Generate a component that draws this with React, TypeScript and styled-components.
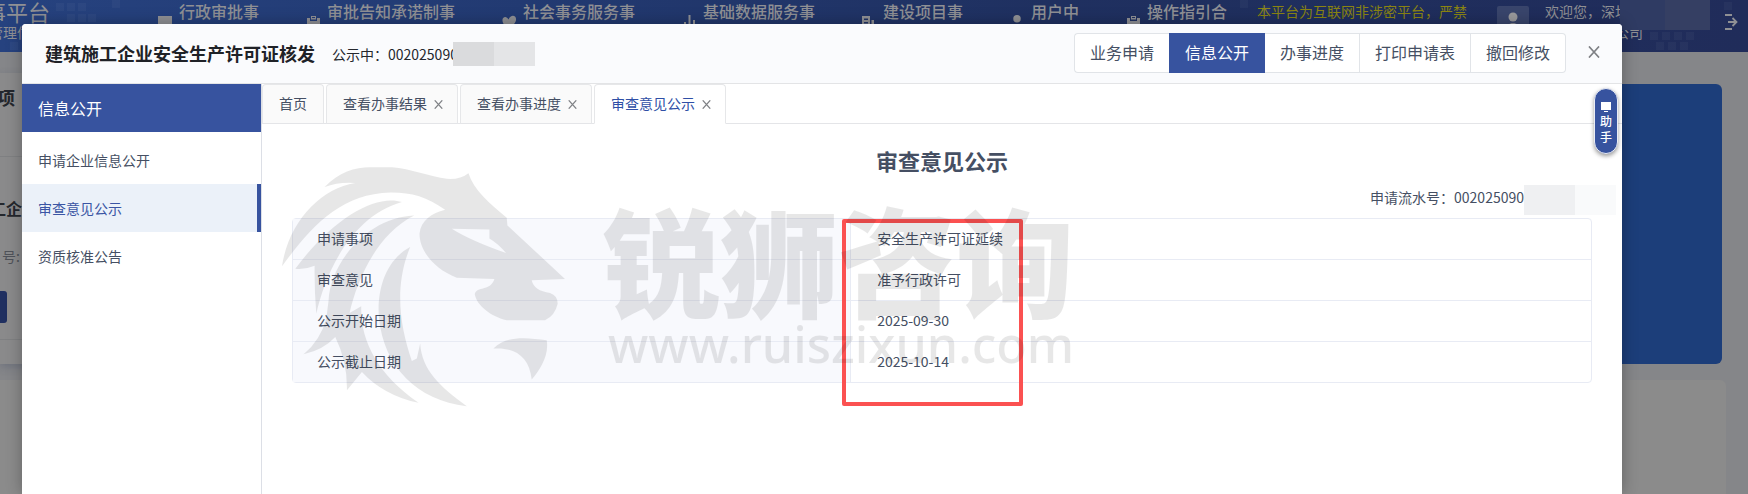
import React from 'react';
import styled, { createGlobalStyle } from 'styled-components';

const GlobalStyle = createGlobalStyle`
  * { box-sizing: border-box; }
  body {
    margin: 0;
    font-family: "Noto Sans CJK SC", "Noto Sans", sans-serif;
    font-size: 14px;
    line-height: 20px;
    color: #454f63;
  }
  button { font: inherit; color: inherit; cursor: pointer; }
  a { color: inherit; text-decoration: none; }
`;

const Page = styled.div`
  display: grid;
  grid-template-columns: minmax(0, 1fr);
  grid-template-rows: minmax(100vh, auto);
  overflow: hidden;
`;

/* ---------- dimmed portal page ---------- */

const Portal = styled.div`
  grid-area: 1 / 1;
  display: flex;
  flex-direction: column;
  background: #858689;
`;

const PortalHeader = styled.header`
  position: relative;
  display: flex;
  align-items: flex-start;
  height: 52px;
  background: linear-gradient(90deg, #26427f 0%, #223a72 30%, #1f3060 60%, #202c5a 100%);
  color: #8f9094;
  white-space: nowrap;
  overflow: hidden;
`;

const HeaderDots = styled.svg`
  position: absolute;
  inset: 0;
  width: 100%;
  height: 52px;
  fill: #ffffff;
  opacity: 0.03;
`;

const Brand = styled.div`
  display: flex;
  flex-direction: column;
  align-items: flex-end;
  width: 50px;
  flex: none;
`;

const BrandTitle = styled.div`
  font-size: 22px;
  line-height: 22px;
`;

const BrandSub = styled.div`
  padding-right: 19px;
  line-height: 20px;
`;

const PortalNav = styled.nav`
  display: flex;
  gap: 47px;
  margin-left: 108px;
  font-size: 16px;
  line-height: 22px;
  font-weight: 500;
`;

const NavLink = styled.a`
  display: flex;
  gap: 5px;
`;

const NavIcon = styled.svg`
  width: 16px;
  height: 16px;
  margin-top: 15px;
  fill: currentColor;
`;

const Notice = styled.div`
  margin-left: 30px;
  line-height: 22px;
  color: #8a8412;
`;

const Avatar = styled.svg`
  width: 32px;
  height: 32px;
  margin: 6px 16px 0 30px;
  flex: none;
`;

const UserInfo = styled.div`
  position: relative;
  line-height: 22px;
`;

const UserCompany = styled.div`
  padding-left: 70px;
  line-height: 20px;
`;

const NameMask = styled.span`
  position: absolute;
  left: 75px;
  top: 0;
  width: 90px;
  height: 30px;
  background: linear-gradient(90deg, #2f3b63 50%, #353f63 50%);
`;

const LogoutButton = styled.button`
  display: flex;
  margin: 13px 10px 0 auto;
  padding: 0;
  border: 0;
  background: none;
`;

const PortalBody = styled.div`
  display: flex;
  margin: 21px 26px 0 0;
  height: 291px;
`;

const CaseCard = styled.section`
  flex: 1;
  display: flex;
  flex-direction: column;
  background: #8a8a8b;
  white-space: nowrap;
  box-shadow: 0 3px 8px rgba(60, 70, 100, 0.3);
`;

const CaseHeading = styled.div`
  display: flex;
  justify-content: flex-end;
  width: 15px;
  height: 83px;
  padding-top: 12px;
  font-size: 18px;
  line-height: 24px;
  font-weight: 700;
  color: #24272d;
`;

const CaseName = styled.div`
  display: flex;
  justify-content: flex-end;
  width: 22px;
  height: 85px;
  padding-top: 40px;
  border-top: 1px solid #7f8082;
  font-size: 16px;
  line-height: 22px;
  font-weight: 700;
  color: #24272d;
`;

const CaseNumber = styled.div`
  display: flex;
  justify-content: flex-end;
  width: 20px;
  height: 50px;
  padding-top: 5px;
  color: #4f5259;
`;

const CaseButton = styled.button`
  width: 7px;
  height: 32px;
  padding: 0;
  border: 0;
  border-radius: 0 3px 3px 0;
  background: #1f2f60;
`;

const CaseFooter = styled.div`
  margin-top: 16px;
  border-top: 1px solid #7f8082;
`;

const Hero = styled.section`
  flex: 1;
  margin-top: 11px;
  border-radius: 0 6px 6px 0;
  background: #1c3e7a;
`;

const LowerCard = styled.section`
  flex: 1;
  margin: 16px 22px 0 0;
  border-radius: 0 6px 0 0;
  background: #8b8b8b;
`;

/* ---------- modal ---------- */

const Modal = styled.main`
  grid-area: 1 / 1;
  position: relative;
  display: flex;
  flex-direction: column;
  margin: 24px 126px 0 22px;
  border-radius: 4px 4px 0 0;
  background: #ffffff;
  box-shadow: 0 0 16px rgba(0, 0, 0, 0.3);
`;

const ModalHeader = styled.header`
  display: flex;
  align-items: center;
  height: 60px;
  padding: 0 22px 0 23px;
  border-bottom: 1px solid #e3e4e6;
  border-radius: 4px 4px 0 0;
  background: #fafbfd;
`;

const ModalTitle = styled.h1`
  margin: 0 17px 2px 0;
  font-size: 18px;
  line-height: 24px;
  font-weight: 700;
  color: #1f2227;
`;

const Status = styled.div`
  display: flex;
  align-items: center;
  color: #24272d;
`;

const StatusMask = styled.span`
  width: 82px;
  height: 24px;
  margin-left: -5px;
  background: linear-gradient(90deg, #dadbdd 50%, #e4e5e7 50%);
`;

const ActionGroup = styled.div`
  display: flex;
  margin: 0 22px 2px auto;
`;

const ActionButton = styled.button<{ $active?: boolean }>`
  height: 40px;
  padding: 0 15px 2px;
  border: 1px solid ${(p) => (p.$active ? '#37539f' : '#e1e4e8')};
  border-left-width: ${(p) => (p.$active ? '1px' : '0')};
  background: ${(p) => (p.$active ? '#37539f' : '#ffffff')};
  color: ${(p) => (p.$active ? '#ffffff' : '#454f63')};
  font-size: 16px;
  &:first-child {
    border-left-width: 1px;
    border-right-width: 0;
    border-radius: 4px 0 0 4px;
  }
  &:last-child { border-radius: 0 4px 4px 0; }
`;

const IconButton = styled.button<{ $size: number }>`
  display: flex;
  align-items: center;
  justify-content: center;
  width: ${(p) => p.$size}px;
  height: ${(p) => p.$size}px;
  padding: 0;
  border: 0;
  background: none;
  color: #7f8185;
`;

const HeaderClose = styled(IconButton)`
  margin-bottom: 3px;
`;

const ModalBody = styled.div`
  flex: 1;
  display: flex;
`;

const Sidebar = styled.aside`
  width: 240px;
  flex: none;
  border-right: 1px solid #dcdfe6;
`;

const SidebarTitle = styled.h2`
  margin: 0 0 4px;
  padding: 0 16px;
  background: #37539f;
  color: #ffffff;
  font-size: 16px;
  line-height: 48px;
  font-weight: 400;
`;

const SideLink = styled.a<{ $active?: boolean }>`
  display: block;
  padding: 0 16px;
  line-height: 48px;
  border-right: 4px solid ${(p) => (p.$active ? '#37539f' : 'transparent')};
  background: ${(p) => (p.$active ? '#ebf1f9' : 'transparent')};
  color: ${(p) => (p.$active ? '#3a55a4' : '#454f63')};
`;

const Content = styled.section`
  position: relative;
  flex: 1;
  min-width: 0;
`;

const TabBar = styled.div`
  display: flex;
  gap: 2px;
  height: 40px;
  border-bottom: 1px solid #e4e5e8;
`;

const Tab = styled.div<{ $active?: boolean }>`
  display: flex;
  align-items: center;
  gap: 6px;
  height: 40px;
  padding: 0 14px 0 16px;
  border: 1px solid #e6e7e9;
  border-bottom-color: ${(p) => (p.$active ? '#ffffff' : '#e4e5e8')};
  border-radius: 4px 4px 0 0;
  background: ${(p) => (p.$active ? '#ffffff' : '#fafafa')};
  color: ${(p) => (p.$active ? '#2f4fa6' : '#454f63')};
  &:first-child { padding-right: 16px; }
`;

const TabLabel = styled.button`
  padding: 0 0 2px;
  border: 0;
  background: none;
`;

const SectionTitle = styled.h2`
  margin: 20px 0 9px;
  text-align: center;
  font-size: 22px;
  line-height: 32px;
  font-weight: 700;
`;

const Serial = styled.div`
  display: flex;
  justify-content: flex-end;
  padding-right: 6px;
  margin-bottom: 3px;
  line-height: 24px;
`;

const SerialMask = styled.span`
  width: 92px;
  height: 30px;
  background: linear-gradient(90deg, #eff0f2 55%, #f9fafb 55%);
`;

const TableWrap = styled.div`
  position: relative;
  margin: 0 30px;
  border: 1px solid #e8ebf4;
  border-radius: 4px;
`;

const DetailTable = styled.table`
  width: 100%;
  border-collapse: separate;
  border-spacing: 0;
  table-layout: fixed;
  th, td {
    height: 41px;
    padding: 0 24px 2px;
    border-bottom: 1px solid #e8ebf4;
    text-align: left;
    font-weight: 400;
  }
  th {
    width: 43%;
    border-right: 1px solid #e8ebf4;
    background: #f8f9fd;
  }
  td { padding-left: 26px; }
  tr:last-child > * { height: 40px; border-bottom: 0; }
`;

const Highlight = styled.div`
  position: absolute;
  left: calc(43% - 9px);
  top: 0;
  width: 181px;
  height: 187px;
  border: 4px solid #fb5151;
  border-radius: 2px;
`;

const Watermark = styled.div`
  position: absolute;
  left: 20px;
  top: 83px;
  display: flex;
  gap: 37px;
  opacity: 0.09;
  color: #000000;
  white-space: nowrap;
  pointer-events: none;
`;

const WatermarkText = styled.div`
  padding-top: 33px;
`;

const WatermarkName = styled.div`
  font-size: 118px;
  line-height: 116px;
  font-weight: 900;
`;

const WatermarkUrl = styled.div`
  padding-left: 6px;
  font-family: "Noto Sans", sans-serif;
  font-size: 50px;
  line-height: 56px;
  font-weight: 500;
`;

const Assistant = styled.button`
  position: absolute;
  right: 4px;
  top: 64px;
  display: flex;
  flex-direction: column;
  align-items: center;
  width: 24px;
  height: 66px;
  padding: 12px 0 0;
  border: 1px solid #e9ecf5;
  border-radius: 12px;
  background: #37539f;
  box-shadow: 0 2px 4px rgba(0, 0, 0, 0.4);
  color: #ffffff;
  font-size: 12px;
  line-height: 16px;
  font-weight: 500;
`;

const Cross = ({ size, width }: { size: number; width: number }) => (
  <svg width={size} height={size} viewBox="0 0 10 10" fill="none" stroke="currentColor" strokeWidth={width}>
    <path d="M0.8 0.3 9.2 9.7M9.2 0.3 0.8 9.7" />
  </svg>
);

const clipboard = <path fillRule="evenodd" d="M1 3h3v3h7V3h3v12H1zM5 1h5v3.500H5zM6 2v1h3V2z" />;

const navItems = [
  { label: '行政审批事', icon: <path d="M0 1h14v13H0z" /> },
  { label: '审批告知承诺制事', icon: clipboard },
  { label: '社会事务服务事', icon: <path d="M6.500 4.500C8 1 11 0 13 1.500c2 2 1 5-1 7.500-2 2-3 3-5 4C4 12 0 9 .500 4.500 1 1 5 1 6.500 4.500z" /> },
  { label: '基础数据服务事', icon: <path d="M2 7h2v8H2zM6.500 0h2v15h-2zM11 5h2v10h-2z" /> },
  {
    label: '建设项目事',
    icon: <path fillRule="evenodd" d="M0 1h8v14H0zM2 3.500v1.500h4V3.500zM2 7v1.500h4V7zM9.500 5H12v10H9.500z" />,
  },
  { label: '用户中', icon: <path d="M7 0a3.700 3.700 0 1 1 0 7.500A3.700 3.700 0 0 1 7 0zM1 15c0-8 12-8 12 0z" /> },
  { label: '操作指引合', icon: clipboard },
];

const actions = ['业务申请', '信息公开', '办事进度', '打印申请表', '撤回修改'];
const sideLinks = ['申请企业信息公开', '审查意见公示', '资质核准公告'];
const tabs = ['首页', '查看办事结果', '查看办事进度', '审查意见公示'];
const details = [
  ['申请事项', '安全生产许可证延续'],
  ['审查意见', '准予行政许可'],
  ['公示开始日期', '2025-09-30'],
  ['公示截止日期', '2025-10-14'],
];

const dots = [
  [56, 3], [67, 3], [78, 3], [67, 14], [78, 14], [88, 14], [112, 0], [10, 42],
  [1240, 0], [1262, 6], [1650, 32], [1662, 32], [1674, 32], [1686, 32], [1656, 42], [1668, 42], [1680, 42], [1724, 2],
];

const Lion = () => (
  <svg width="283" height="240" viewBox="65 80 850 720" fill="currentColor" fillRule="evenodd">
    <path d="M193 140C235 95 285 80 330 80L395 80C450 84 510 108 560 115Q600 118 625 98C640 148 690 190 740 232L742 255 915 416 815 420Q822 452 870 458 893 466 893 490 885 525 855 540L740 540C690 528 650 495 644 462 650 436 690 455 703 416L590 412C520 385 478 330 478 280 482 240 515 218 555 208 500 168 450 155 390 156 240 160 150 260 65 378 85 245 180 145 285 128Q235 124 193 140ZM575 265Q630 300 738 338 715 310 688 294L688 267Z" />
    <path d="M425 185C350 160 220 230 105 385Q135 388 163 376 162 450 168 520C195 400 270 230 425 185Z" />
    <path d="M462 225C320 230 210 370 205 480L198 535Q180 600 130 642 190 628 225 590 262 665 260 750L305 695Q370 765 475 788C350 700 300 600 303 498L268 518C290 420 350 280 462 225Z" />
    <path d="M450 320C375 360 350 450 356 530 370 680 470 780 620 798 540 740 485 690 480 610L470 655 455 662C420 560 400 440 450 320Z" />
    <path d="M700 625C740 585 800 592 860 600 868 645 840 690 815 718 808 650 765 620 700 625Z" />
  </svg>
);

export default function App() {
  return (
    <Page>
      <GlobalStyle />
      <Portal>
        <PortalHeader>
          <HeaderDots aria-hidden="true">
            {dots.map(([x, y]) => (
              <rect key={`${x}-${y}`} x={x} y={y} width="8" height="8" />
            ))}
          </HeaderDots>
          <Brand>
            <BrandTitle>事平台</BrandTitle>
            <BrandSub>管理信</BrandSub>
          </Brand>
          <PortalNav>
            {navItems.map((item) => (
              <NavLink key={item.label} href="#">
                <NavIcon viewBox="0 0 16 16" aria-hidden="true">{item.icon}</NavIcon>
                {item.label}
              </NavLink>
            ))}
          </PortalNav>
          <Notice>本平台为互联网非涉密平台，严禁</Notice>
          <Avatar viewBox="0 0 32 32" aria-hidden="true">
            <rect width="32" height="32" rx="2" fill="#39456c" />
            <circle cx="16" cy="11" r="4.500" fill="#9a9a9c" />
            <path d="M8 24c0-9 16-9 16 0z" fill="#9a9a9c" />
          </Avatar>
          <UserInfo>
            欢迎您，深圳
            <UserCompany>公司</UserCompany>
            <NameMask />
          </UserInfo>
          <LogoutButton aria-label="退出">
            <svg width="14" height="18" viewBox="0 0 14 18" fill="none" stroke="currentColor" strokeWidth="1.800">
              <path d="M1 2h7M1 16h7M4 9h8M8.500 5 12.500 9l-4 4" />
            </svg>
          </LogoutButton>
        </PortalHeader>
        <PortalBody>
          <CaseCard>
            <CaseHeading>项</CaseHeading>
            <CaseName>工企</CaseName>
            <CaseNumber>号:</CaseNumber>
            <CaseButton aria-label="办理" />
            <CaseFooter />
          </CaseCard>
          <Hero />
        </PortalBody>
        <LowerCard />
      </Portal>

      <Modal>
        <ModalHeader>
          <ModalTitle>建筑施工企业安全生产许可证核发</ModalTitle>
          <Status>
            公示中：002025090
            <StatusMask />
          </Status>
          <ActionGroup>
            {actions.map((label, i) => (
              <ActionButton key={label} $active={i === 1}>{label}</ActionButton>
            ))}
          </ActionGroup>
          <HeaderClose $size={12} aria-label="关闭">
            <Cross size={12} width={1.3} />
          </HeaderClose>
        </ModalHeader>
        <ModalBody>
          <Sidebar>
            <SidebarTitle>信息公开</SidebarTitle>
            {sideLinks.map((label, i) => (
              <SideLink key={label} href="#" $active={i === 1}>{label}</SideLink>
            ))}
          </Sidebar>
          <Content>
            <TabBar>
              {tabs.map((label, i) => (
                <Tab key={label} $active={i === 3}>
                  <TabLabel>{label}</TabLabel>
                  {i > 0 && (
                    <IconButton $size={10} aria-label={`关闭${label}`}>
                      <Cross size={9} width={1.3} />
                    </IconButton>
                  )}
                </Tab>
              ))}
            </TabBar>
            <SectionTitle>审查意见公示</SectionTitle>
            <Serial>
              申请流水号：002025090
              <SerialMask />
            </Serial>
            <TableWrap>
              <DetailTable>
                <tbody>
                  {details.map(([name, value]) => (
                    <tr key={name}>
                      <th scope="row">{name}</th>
                      <td>{value}</td>
                    </tr>
                  ))}
                </tbody>
              </DetailTable>
              <Highlight />
            </TableWrap>
            <Watermark aria-hidden="true">
              <Lion />
              <WatermarkText>
                <WatermarkName>锐狮咨询</WatermarkName>
                <WatermarkUrl>www.ruiszixun.com</WatermarkUrl>
              </WatermarkText>
            </Watermark>
          </Content>
        </ModalBody>
        <Assistant>
          <svg width="10" height="12" viewBox="0 0 10 12" fill="currentColor" aria-hidden="true">
            <path d="M0 1h10v8H0zM3 10h4v1H3z" />
          </svg>
          <span>助</span>
          <span>手</span>
        </Assistant>
      </Modal>
    </Page>
  );
}
